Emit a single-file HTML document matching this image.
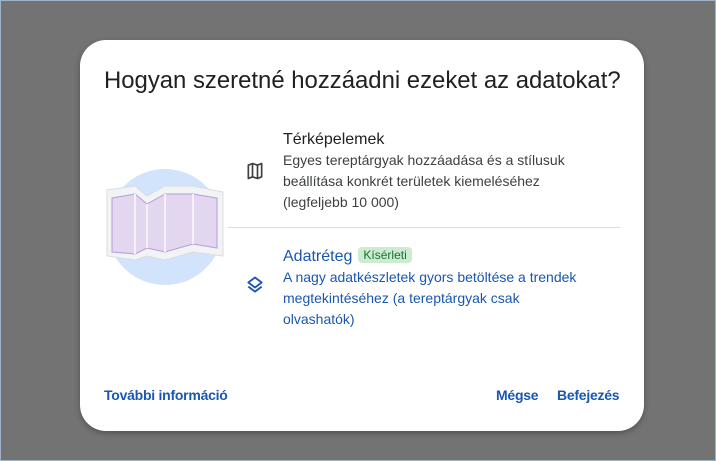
<!DOCTYPE html>
<html><head><meta charset="utf-8"><style>
body{margin:0;width:716px;height:461px;background:#737373;font-family:"Liberation Sans",sans-serif;position:relative;overflow:hidden}
.frame{position:absolute;inset:0;border:1px solid #9fb3c8;box-sizing:border-box}
.dlg{position:absolute;left:80px;top:40px;width:564px;height:391px;background:#fff;border-radius:26px;box-shadow:0 2px 6px rgba(0,0,0,.3)}
.t{position:absolute;left:24px;top:27px;font-size:23.9px;color:#202124;white-space:nowrap}
.h{position:absolute;left:203px;font-size:16px;color:#202124}
.d{position:absolute;left:203px;font-size:14px;line-height:21px;color:#3c4043;width:312px}
.blue{color:#1a57b0}
.div{position:absolute;left:148px;top:187px;width:392px;height:1px;background:#dadce0}
.chip{display:inline-block;background:#cdeccf;color:#137333;font-size:12px;padding:1px 5px;border-radius:4px;margin-left:6px;vertical-align:2px}
.f{position:absolute;top:347px;font-size:14px;color:#1a57b0;font-weight:bold;letter-spacing:-0.25px}
</style></head><body><div class="frame"></div>
<div class="dlg">
<div class="t">Hogyan szeretné hozzáadni ezeket az adatokat?</div>
<svg style="position:absolute;left:25px;top:128px" width="122" height="120" viewBox="0 0 122 120">
<circle cx="60" cy="59" r="58" fill="#d2e3fc"/>
<polygon points="2,22 30,18 42,28 60,18 88,18 118,24 118,88 88,84 60,92 42,88 30,92 2,88" fill="#f1f3f4" stroke="#dadce0"/>
<polygon points="7,30 30,26 42,36 60,26 88,26 112,30 112,80 88,76 60,84 42,80 30,86 7,84" fill="#e3d7f0" stroke="#b39ddb"/>
<path d="M30 26v60 M42 36v44 M60 26v58 M88 26v50" stroke="#f5f0fa" stroke-width="2"/>
</svg>
<svg style="position:absolute;left:165px;top:121px" width="20" height="20" viewBox="0 0 24 24"><path d="M4 5l5-2 6 2 5-2v16l-5 2-6-2-5 2z M9 3v16 M15 5v16" fill="none" stroke="#3c4043" stroke-width="2" stroke-linejoin="round"/></svg>
<div class="h" style="top:91px">Térképelemek</div>
<div class="d" style="top:110px">Egyes tereptárgyak hozzáadása és a stílusuk beállítása konkrét területek kiemeléséhez (legfeljebb 10 000)</div>
<div class="div"></div>
<svg style="position:absolute;left:165px;top:235px" width="20" height="20" viewBox="0 0 24 24"><path d="M12 3l8 6-8 6-8-6z M4 14l8 6 8-6" fill="none" stroke="#1a57b0" stroke-width="2.2" stroke-linejoin="round"/></svg>
<div class="h blue" style="top:207px">Adatréteg<span class="chip">Kísérleti</span></div>
<div class="d blue" style="top:227px">A nagy adatkészletek gyors betöltése a trendek megtekintéséhez (a tereptárgyak csak olvashatók)</div>
<div class="f" style="left:24px">További információ</div>
<div class="f" style="left:416px">Mégse</div>
<div class="f" style="left:477px">Befejezés</div>
</div>
</body></html>
